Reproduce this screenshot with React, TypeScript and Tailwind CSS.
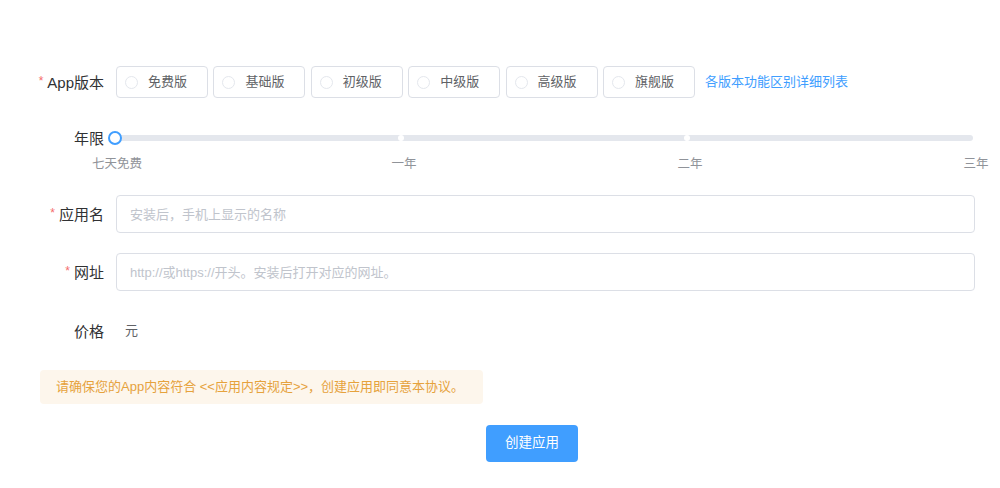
import { useState } from "react";

const versions = ["免费版", "基础版", "初级版", "中级版", "高级版", "旗舰版"];
const marks = ["七天免费", "一年", "二年", "三年"];

function FormLabel({ text, required }: { text: string; required?: boolean }) {
  return (
    <div className="w-[64px] shrink-0 flex justify-end whitespace-nowrap text-[15px] text-[#303133] leading-none">
      {required && <span className="text-[#f56c6c] text-[12px] mr-[4px] self-start">*</span>}
      <span>{text}</span>
    </div>
  );
}

export default function App() {
  const [version, setVersion] = useState<string | null>(null);
  const [name, setName] = useState("");
  const [url, setUrl] = useState("");

  return (
    <div
      className="w-[1000px] h-[488px] bg-white pl-[40px] flex flex-col"
      style={{ fontFamily: '"Liberation Sans", "Noto Sans CJK SC", sans-serif' }}
    >
      {/* version */}
      <div className="mt-[66px] h-[32px] flex items-center">
        <FormLabel text="App版本" required />
        <div className="ml-[12px] flex items-center gap-[5.4px]">
          {versions.map((v) => (
            <button
              key={v}
              onClick={() => setVersion(v)}
              className="w-[92px] h-[32px] border border-[#dcdfe6] rounded-[4px] flex items-center pl-[8px] bg-white"
            >
              <span
                className={
                  "w-[13px] h-[13px] rounded-full border " +
                  (version === v ? "border-[#409eff] border-[4px]" : "border-[#e4e7ed]")
                }
              />
              <span className="ml-[10px] text-[13px] text-[#606266]">{v}</span>
            </button>
          ))}
        </div>
        <a className="ml-[10px] text-[13px] text-[#409eff] cursor-pointer">各版本功能区别详细列表</a>
      </div>

      {/* slider */}
      <div className="mt-[33px] h-[14px] flex items-center">
        <div className="w-[64px] shrink-0 text-right text-[15px] text-[#303133] leading-none">年限</div>
        <div className="ml-[11px] relative w-[858px] h-[6px] bg-[#e4e7ed] rounded-[3px]">
          <span className="absolute top-0 left-[286px] -translate-x-1/2 w-[6px] h-[6px] rounded-full bg-white" />
          <span className="absolute top-0 left-[572px] -translate-x-1/2 w-[6px] h-[6px] rounded-full bg-white" />
          <span className="absolute top-1/2 left-0 -translate-x-1/2 -translate-y-1/2 w-[14px] h-[14px] rounded-full border-2 border-[#409eff] bg-white" />
          {marks.map((m, i) => (
            <span
              key={m}
              className="absolute top-[23px] -translate-x-1/2 text-[12.5px] leading-none text-[#909399] whitespace-nowrap"
              style={{ left: i * 286 + (i === 0 ? 2 : 3) }}
            >
              {m}
            </span>
          ))}
        </div>
      </div>

      {/* name */}
      <div className="mt-[50px] flex items-center">
        <FormLabel text="应用名" required />
        <input
          value={name}
          onChange={(e) => setName(e.target.value)}
          placeholder="安装后，手机上显示的名称"
          className="ml-[12px] w-[859px] h-[38px] border border-[#dcdfe6] rounded-[4px] px-[13px] text-[13px] text-[#606266] placeholder:text-[#c0c4cc] outline-none"
        />
      </div>

      {/* url */}
      <div className="mt-[20px] flex items-center">
        <FormLabel text="网址" required />
        <input
          value={url}
          onChange={(e) => setUrl(e.target.value)}
          placeholder="http://或https://开头。安装后打开对应的网址。"
          className="ml-[12px] w-[859px] h-[38px] border border-[#dcdfe6] rounded-[4px] px-[13px] text-[13px] text-[#606266] placeholder:text-[#c0c4cc] outline-none"
        />
      </div>

      {/* price */}
      <div className="mt-[21px] h-[38px] flex items-center">
        <FormLabel text="价格" />
        <span className="ml-[21px] text-[13px] text-[#606266]">元</span>
      </div>

      {/* notice */}
      <div className="mt-[20px] w-[443px] h-[34px] bg-[#fdf6ec] rounded-[4px] flex items-center pl-[16px] text-[13px] text-[#e6a23c]">
        请确保您的App内容符合 &lt;&lt;应用内容规定&gt;&gt;，创建应用即同意本协议。
      </div>

      {/* submit */}
      <button className="mt-[21px] ml-[446px] w-[92px] h-[37px] rounded-[4px] bg-[#409eff] text-white text-[13.5px]">
        创建应用
      </button>
    </div>
  );
}
